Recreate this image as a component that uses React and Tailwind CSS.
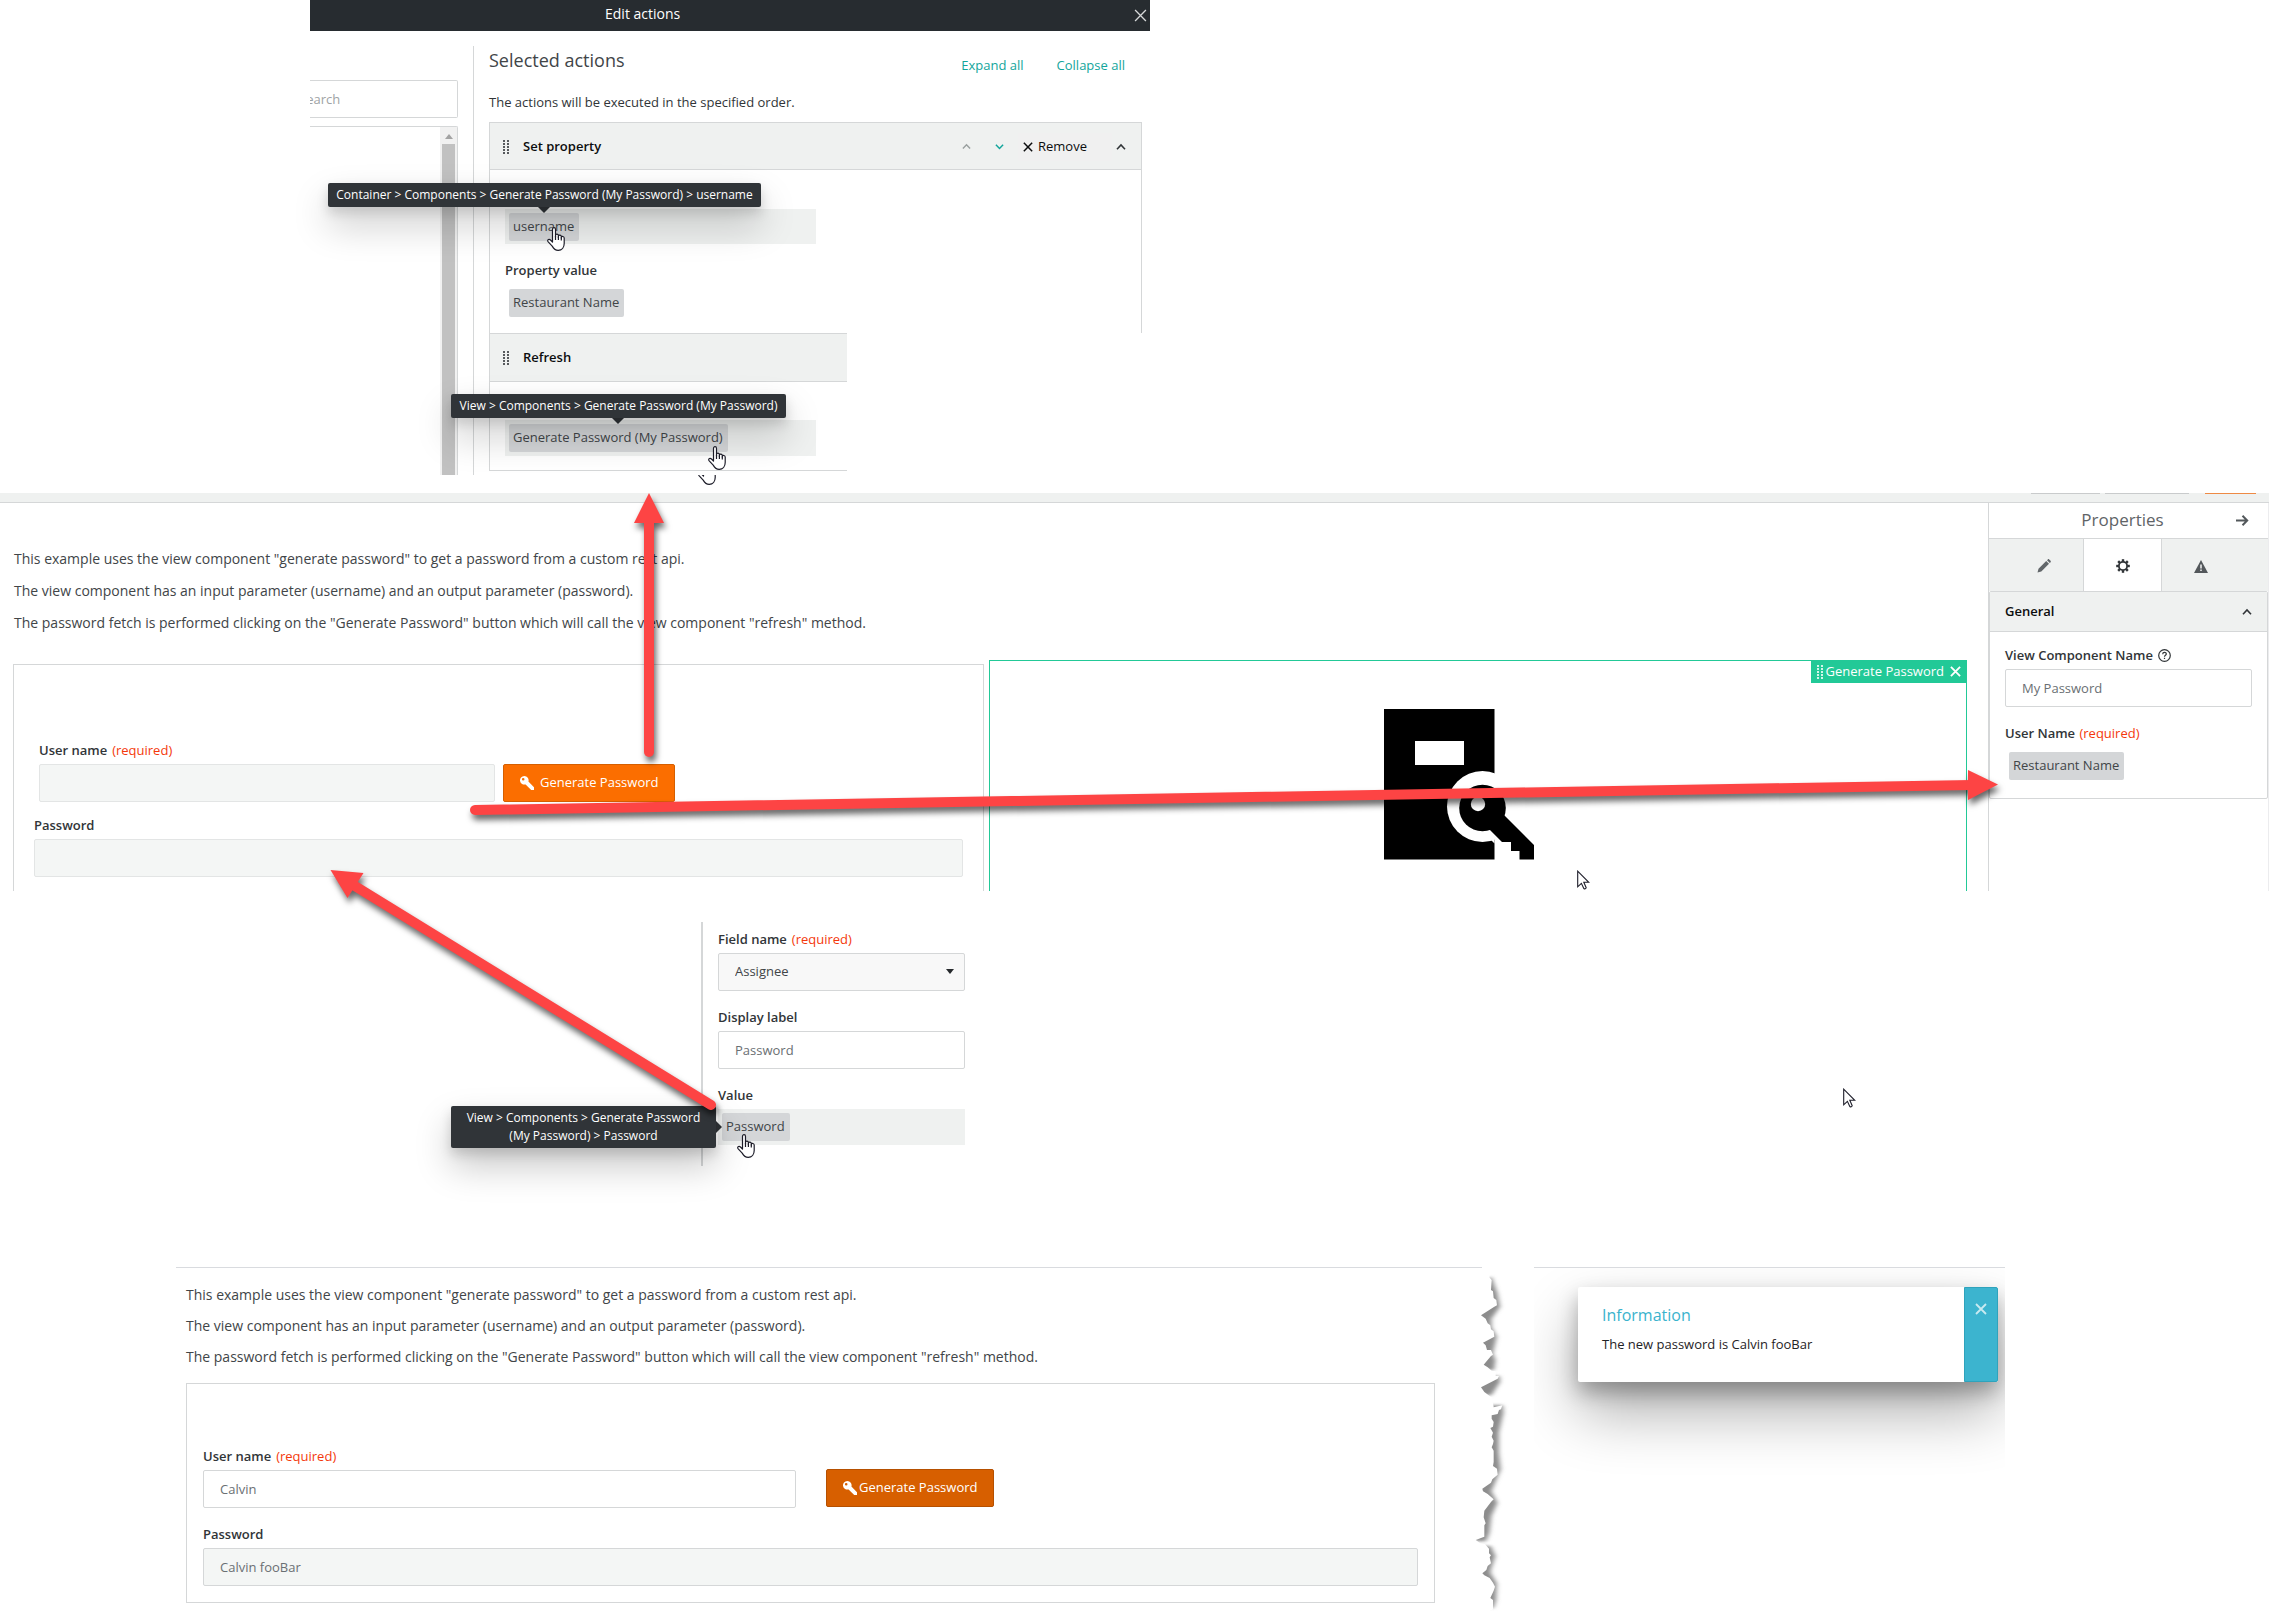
import React from "react";

const inputBase =
  "block h-[38px] rounded-[2px] border px-4 text-[13px] outline-none";
const inputPlain = inputBase + " border-[#d5d7d8] text-[#6a6f73]";
const inputMuted = inputBase + " border-[#e3e5e5] bg-[#f4f6f5] text-[#6a6f73]";

function Label({ htmlFor, required, children, className = "" }) {
  return (
    <label htmlFor={htmlFor} className={"mb-1 flex h-5 items-center text-[13px] leading-5 font-semibold text-[#313538] " + className}>
      {children}
      {required && <span className="ml-[5px] font-normal text-[#f4380b]">(required)</span>}
    </label>
  );
}

function Chip({ children, className = "" }) {
  return (
    <span className={"relative inline-flex h-7 items-center rounded-[2px] bg-[#d4d6d8] pr-[5px] pl-1 text-[13px] whitespace-nowrap text-[#414548] " + className}>
      {children}
    </span>
  );
}

function DragDots({ color }) {
  const cells = [];
  for (let r = 0; r < 5; r++) for (let c = 0; c < 2; c++) cells.push(<rect key={r + "-" + c} x={c * 4} y={r * 3} width="2" height="2" fill={color} />);
  return (
    <svg width="6" height="14" viewBox="0 0 6 14" fillOpacity="0.8" aria-hidden="true">
      {cells}
    </svg>
  );
}

function Chevron({ up, color, size = 9, weight = 1.6 }) {
  return (
    <svg width={size} height={size} viewBox="0 0 10 10" fill="none" stroke={color} strokeWidth={weight} aria-hidden="true">
      <path d={up ? "M1 7.2 5 3l4 4.2" : "M1 3l4 4.2L9 3"} />
    </svg>
  );
}

function Cross({ color, size, weight }) {
  return (
    <svg width={size} height={size} viewBox="0 0 12 12" fill="none" stroke={color} strokeWidth={weight} aria-hidden="true">
      <path d="M1 1l10 10M11 1L1 11" />
    </svg>
  );
}

function KeyIcon() {
  return (
    <svg width="14" height="14" viewBox="0 0 14 14" fill="#fff" aria-hidden="true">
      <path
        fillRule="evenodd"
        d="M4.3 0a4.3 4.3 0 0 1 4.1 5.6L14 11.2V14h-2.8L5.6 8.4A4.3 4.3 0 1 1 4.3 0zM3.2 1.9a1.3 1.3 0 1 0 0 2.6 1.3 1.3 0 0 0 0-2.6z"
      />
    </svg>
  );
}

function Hand({ className }) {
  return (
    <svg className={"absolute z-20 " + className} width="18" height="24" viewBox="0 0 18 24" fill="#fff" stroke="#1c1c28" strokeWidth="1.2" strokeLinejoin="round" aria-hidden="true">
      <path d="M5.5 15V2.4c0-2.3 3-2.3 3 0V10 8.2c.3-1.5 2.7-1.4 2.9.2v2-1.3c.4-1.4 2.7-1.2 2.9.4v1.6-.9c.5-1.2 2.8-.9 2.9.8v5.5c0 3.8-2.3 6.8-6 6.8-3.4 0-4.6-1.7-6-4.2L1 14.6c-1-2 1.2-3 2.5-1.6z" />
      <path d="M8.5 9v4M11.4 9.600v3.400M14.300 10.500v3" />
    </svg>
  );
}

function Pointer({ className }) {
  return (
    <svg className={"absolute " + className} width="13" height="20" viewBox="0 0 13 20" fill="#fff" stroke="#1c1c28" strokeWidth="1.1" aria-hidden="true">
      <path d="M.7 1.200v15.600l3.700-3.500 2.400 5.100c.4 1 2.700.2 2.300-.9L6.800 12.300h5z" />
    </svg>
  );
}

function Tooltip({ children, className = "" }) {
  return (
    <span
      role="tooltip"
      className={"absolute z-10 rounded-[2px] bg-[#303438] text-center text-[12px] font-medium text-white shadow-[0_6px_12px_rgba(0,0,0,0.15),0_18px_36px_rgba(0,0,0,0.22)] " + className}
    >
      {children}
    </span>
  );
}

function Caret({ className = "" }) {
  return <span className={"absolute z-10 border-x-[6px] border-t-[6px] border-x-transparent border-t-[#303438] " + className} />;
}

function Intro({ className }) {
  return (
    <div className={"flex flex-col text-[14px] leading-5 text-[#414548] " + className}>
      <p>This example uses the view component "generate password" to get a password from a custom rest api.</p>
      <p>The view component has an input parameter (username) and an output parameter (password).</p>
      <p>The password fetch is performed clicking on the "Generate Password" button which will call the view component "refresh" method.</p>
    </div>
  );
}

function EditActions() {
  return (
    <section className="relative ml-[310px] max-w-[840px]">
      <header className="flex h-[31px] items-center bg-[#272c30] text-white">
        <h1 className="flex-1 pb-[5px] pl-[295px] text-[14px] font-medium">Edit actions</h1>
        <button aria-label="Close" className="mr-[3px] pb-px">
          <Cross color="#d6d8d9" size={13} weight={1.2} />
        </button>
      </header>
      <div className="flex pt-[15px]">
        <aside className="flex w-[164px] flex-col border-r border-[#d5d7d8] pt-[34px] pr-[15px]">
          <label className="sr-only" htmlFor="search">Search actions</label>
          <div className="flex h-[38px] overflow-hidden rounded-r-[2px] border border-l-0 border-[#d5d7d8]">
            <input id="search" placeholder="Search" className="-ml-[11px] w-full pt-px text-[13px] outline-none placeholder:text-[#a0a3a5]" />
          </div>
          <div className="mt-2 flex flex-1 justify-end rounded-tr-[2px] border-t border-r border-[#d5d7d8]">
            <div className="flex w-[17px] flex-col items-center bg-[#f1f1f1]">
              <svg width="8" height="5" viewBox="0 0 8 5" className="mt-[7px] mb-[5px]" aria-hidden="true">
                <path d="M0 5l4-5 4 5z" fill="#a3a3a3" />
              </svg>
              <div className="w-[13px] flex-1 bg-[#c1c1c1]" />
            </div>
          </div>
        </aside>
        <div className="flex-1 pr-[8px] pl-[15px]">
          <div className="flex h-[46px] items-start">
            <h2 className="flex-1 text-[18px] leading-7 text-[#414548]">Selected actions</h2>
            <div className="flex gap-[33px] pt-[9px] pr-[17px] text-[13px] leading-5 text-[#12a59b]">
              <a href="#expand">Expand all</a>
              <a href="#collapse">Collapse all</a>
            </div>
          </div>
          <p className="mb-[10px] text-[13px] leading-5 text-[#313538]">The actions will be executed in the specified order.</p>
          <div className="border border-b-0 border-[#d5d7d8]">
            <div className="flex h-[47px] items-center border-b border-[#d5d7d8] bg-[#eff1f0] pt-px pr-[15px] pl-[13px]">
              <DragDots color="#313538" />
              <h3 className="ml-[14px] flex-1 text-[13px] font-semibold text-[#0c0d0e]">Set property</h3>
              <button aria-label="Move up"><Chevron up color="#9aa09f" /></button>
              <button aria-label="Move down" className="ml-6"><Chevron color="#12a59b" /></button>
              <button className="ml-[14px] flex h-7 items-center gap-[5px] bg-[#f0f0f0] pr-[25px] pl-[5px] text-[13px] text-[#0c0d0e]">
                <Cross color="#0c0d0e" size={10} weight={1.8} />
                Remove
              </button>
              <button aria-label="Collapse" className="ml-1"><Chevron up color="#313538" size={10} /></button>
            </div>
            <div className="px-[15px] pt-[39px] pb-4">
              <div className="flex h-[35px] w-[311px] items-center bg-[#eff1f0] pl-1">
                <Chip>
                  username
                  <Caret className="-top-[6px] left-[29px]" />
                  <Tooltip className="-top-[30px] -left-[181px] w-[433px] leading-6">Container &gt; Components &gt; Generate Password (My Password) &gt; username</Tooltip>
                  <Hand className="top-[14px] left-[38px]" />
                </Chip>
              </div>
              <p className="mt-4 mb-[9px] text-[13px] leading-5 font-semibold text-[#313538]">Property value</p>
              <div className="flex pl-1">
                <Chip>Restaurant Name</Chip>
              </div>
            </div>
          </div>
          <div className="mb-1 w-[358px] border-y border-l border-[#d5d7d8]">
            <div className="flex h-[48px] items-center border-b border-[#d5d7d8] bg-[#eff1f0] pl-[13px]">
              <DragDots color="#313538" />
              <h3 className="ml-[14px] text-[13px] font-semibold text-[#0c0d0e]">Refresh</h3>
            </div>
            <div className="px-[15px] pt-[38px] pb-[14px]">
              <div className="flex h-9 w-[311px] items-center bg-[#eff1f0] pl-1">
                <Chip>
                  Generate Password (My Password)
                  <Caret className="-top-[6px] left-[103px]" />
                  <Tooltip className="-top-[30px] -left-[58px] w-[335px] leading-6">View &gt; Components &gt; Generate Password (My Password)</Tooltip>
                  <Hand className="top-[22px] left-[199px]" />
                </Chip>
              </div>
            </div>
          </div>
        </div>
      </div>
      <div className="absolute top-full left-[388px] h-[11px] w-5 overflow-hidden">
        <Hand className="-top-[14px] left-0" />
      </div>
    </section>
  );
}

function BookKey() {
  return (
    <svg width="188" height="151" viewBox="0 0 188 151" aria-hidden="true">
      <path fillRule="evenodd" d="M0 0h110.500v150.500H0zM31 32v24h49V32z" />
      <circle cx="98.500" cy="97.500" r="35.500" fill="#fff" />
      <circle cx="98.500" cy="99" r="23.300" />
      <path d="M120 106l30 30v14.500h-14.500V142H127v-9h-9l-13-13z" />
      <path d="M107 131l3.500 3.500V128z" fill="#fff" />
      <circle cx="94" cy="95" r="7.200" fill="#fff" />
    </svg>
  );
}

function GearIcon() {
  const teeth = [0, 45, 90, 135, 180, 225, 270, 315];
  return (
    <svg width="14" height="14" viewBox="0 0 14 14" aria-hidden="true">
      <circle cx="7" cy="7" r="4.100" fill="none" stroke="#313538" strokeWidth="1.800" />
      {teeth.map((a) => (
        <rect key={a} x="5.800" y="0.200" width="2.400" height="2.600" fill="#313538" transform={`rotate(${a} 7 7)`} />
      ))}
    </svg>
  );
}

function Properties() {
  return (
    <aside className="w-[281px] border-x border-l-[#d5d7d8] border-r-[#ececee]">
      <div className="flex h-9 items-center border-b border-[#d5d7d8] pr-[19px] pb-px">
        <h2 className="flex-1 pl-[20px] text-center text-[17px] leading-6 text-[#5f6467]">Properties</h2>
        <button aria-label="Collapse panel">
          <svg width="13" height="11" viewBox="0 0 13 11" fill="none" stroke="#53585b" strokeWidth="2" aria-hidden="true">
            <path d="M0 5.500h11M6.500.8l4.700 4.700-4.700 4.700" />
          </svg>
        </button>
      </div>
      <div className="flex h-[52px] bg-[#eff1f0] pl-[16px]">
        <button aria-label="Styles" className="flex w-[78px] items-center justify-center pt-[2px]">
          <svg width="14" height="14" viewBox="0 0 14 14" fill="#62676a" aria-hidden="true">
            <path d="M.5 13.500l1-3.800 7.700-7.700 2.800 2.800-7.700 7.700zM10 1.200l.8-.8c.4-.4 1-.4 1.400 0l1.400 1.400c.4.4.4 1 0 1.400l-.8.8z" />
          </svg>
        </button>
        <button aria-label="Settings" className="flex w-[79px] items-center justify-center border-x border-[#d5d7d8] bg-white pt-[2px]">
          <GearIcon />
        </button>
        <button aria-label="Warnings" className="flex w-[78px] items-center justify-center pt-[2px]">
          <svg width="14" height="13" viewBox="0 0 14 13" aria-hidden="true">
            <path d="M7 0l7 13H0z" fill="#53585b" />
            <path d="M6.300 4.500h1.400v4H6.300zM6.300 9.600h1.400V11H6.300z" fill="#fff" />
          </svg>
        </button>
      </div>
      <div className="rounded-[2px] border border-[#d5d7d8]">
        <div className="flex h-10 items-center border-b border-[#d5d7d8] bg-[#eff1f0] px-[15px]">
          <h3 className="flex-1 text-[13px] font-semibold text-[#0c0d0e]">General</h3>
          <button aria-label="Collapse section"><Chevron up color="#313538" size={10} /></button>
        </div>
        <div className="px-[15px] pt-[13px] pb-[18px]">
          <Label htmlFor="component-name">
            View Component Name
            <svg className="ml-[5px]" width="13" height="13" viewBox="0 0 13 13" fill="none" stroke="#313538" strokeWidth="1.200" aria-hidden="true">
              <circle cx="6.500" cy="6.500" r="5.800" />
              <path d="M4.700 5.200c0-2.400 3.600-2.300 3.600-.2 0 1.300-1.800 1.300-1.800 2.700M6.500 8.700v1.300" />
            </svg>
          </Label>
          <input id="component-name" defaultValue="My Password" className={inputPlain + " w-full"} />
          <p className="mt-4 mb-[9px] text-[13px] leading-5 font-semibold text-[#313538]">
            User Name <span className="ml-px font-normal text-[#f4380b]">(required)</span>
          </p>
          <div className="flex pl-1">
            <Chip>Restaurant Name</Chip>
          </div>
        </div>
      </div>
    </aside>
  );
}

function Designer() {
  return (
    <section className="mt-[18px]">
      <div className="flex h-[10px] items-start justify-end border-b border-[#d5d7d8] bg-[#eff1f0] pr-[13px]">
        <span className="h-px w-[69px] bg-[#c9cbcc]" />
        <span className="ml-[5px] h-px w-[84px] bg-[#c9cbcc]" />
        <span className="ml-4 h-px w-[51px] bg-[#ee8a45]" />
      </div>
      <div className="flex">
        <div className="flex flex-1 flex-col pt-[46px] pr-[21px] pl-[13px]">
          <Intro className="gap-3 pl-px" />
          <div className="mt-[27px] grid flex-1 grid-cols-[971fr_978fr] gap-[5px]">
            <div className="mt-1 border border-b-0 border-[#d5d7d8] px-5 pt-[75px] pb-[14px]">
              <div className="ml-[5px]">
                <Label htmlFor="designer-user" required>User name</Label>
                <div className="flex gap-2">
                  <input id="designer-user" className={inputMuted + " w-[456px]"} />
                  <button className="flex h-[38px] items-center gap-[6px] rounded-[2px] border border-[#d55f00] bg-[#fb6e00] px-4 text-[13px] font-medium text-white">
                    <KeyIcon />
                    Generate Password
                  </button>
                </div>
              </div>
              <Label htmlFor="designer-password" className="mt-[13px]">Password</Label>
              <input id="designer-password" className={inputMuted + " w-full"} />
            </div>
            <div className="flex flex-col items-center border border-b-0 border-[#22c997] bg-white">
              <div className="-mt-px -mr-px flex h-[23px] items-center self-end bg-[#22c997] px-[6px] text-[13px] font-medium text-white">
                <DragDots color="#fff" />
                <span className="ml-[3px]">Generate Password</span>
                <button aria-label="Remove component" className="ml-[6px]"><Cross color="#fff" size={11} weight={2} /></button>
              </div>
              <div className="mt-[26px]">
                <BookKey />
              </div>
            </div>
          </div>
        </div>
        <Properties />
      </div>
    </section>
  );
}

function FieldPanel() {
  return (
    <section className="mt-[31px] ml-[701px] w-[264px] border-l-2 border-[#d5d7d8] pt-[7px] pb-[21px] pl-[15px]">
      <Label htmlFor="field-name" required>Field name</Label>
      <div className="relative">
        <select id="field-name" className={inputBase + " w-full appearance-none border-[#d5d7d8] bg-[#f8f8f8] text-[#414548]"}>
          <option>Assignee</option>
        </select>
        <svg className="pointer-events-none absolute top-4 right-[11px]" width="8" height="5" viewBox="0 0 8 5" aria-hidden="true">
          <path d="M0 0h8L4 5z" fill="#26292c" />
        </svg>
      </div>
      <Label htmlFor="display-label" className="mt-4">Display label</Label>
      <input id="display-label" defaultValue="Password" className={inputPlain + " w-full"} />
      <p className="mt-4 mb-1 text-[13px] leading-5 font-semibold text-[#313538]">Value</p>
      <div className="flex h-9 items-center bg-[#eff1f0] pl-1">
        <Chip>
          Password
          <Caret className="top-[11px] -left-[9px] -rotate-90" />
          <Tooltip className="top-[-7px] right-[calc(100%+6px)] w-[265px] px-3 py-[3px] leading-[18px] whitespace-normal">
            View &gt; Components &gt; Generate Password (My Password) &gt; Password
          </Tooltip>
          <Hand className="top-[21px] left-[15px]" />
        </Chip>
      </div>
    </section>
  );
}

function TornEdge() {
  return (
    <svg className="absolute -top-px left-[1284px]" width="60" height="348" viewBox="0 0 180 1044" aria-hidden="true">
      <defs>
        <filter id="torn-soft" x="-50%" y="-5%" width="200%" height="110%">
          <feGaussianBlur stdDeviation="8 4" />
        </filter>
      </defs>
      <g fill="#8c8c8c" filter="url(#torn-soft)">
        <path d="M40 60L94 32l18 50 8 40-26 36 0 26 16 28-12 50 8 20-4 30H40zM40 330h78l2 18-26 40H40zM40 418h88l2 22-14 60v60l6 50-28 66 18 34-18 40-6 50-10 26H40zM40 840h52l14 30-14 42 0 10 18 30-2 50-8 24H40z" />
      </g>
      <path
        fill="#fff"
        d="M0 20H90l-2 14 7 8-2 30 6 4 2 20 8 6 2 16-8 4-40 26 14 10 6 14 8 6 2 12 8 6 2 16-34 18 8 8 4 14 12 0 6 14-6 4-22 26 12 8 12 10 12 2v14l10 0-4 8-50 26 10 14 24 18 4 28 26-6-4 12-6 2-4 12-18 4v10l6 10-2 14-8 4 8 14-4 12 6 12-2 10-4 10 6 10v34l-2 12 12 8 2 18-16 14-4 10-26 18 2 8 14 8 18 16-8 8-20 26-2 20 6 18-4 6v34l-26 10 14 10 14 2 12 14v14l6 6-4 6 4 18-10 8-4 12-12 10 6 6 16 8 10 14 6 12-4 12-10 22 8 6v28l-16 8-12 12 4 6 16 4 16 8V1044H0z"
      />
    </svg>
  );
}

function Preview() {
  return (
    <section className="relative mt-[101px] ml-44 grid max-w-[1829px] grid-cols-[1306fr_471fr] gap-[52px] pb-[11px]">
      <div className="border-t border-[#d9dbdf] pt-[17px] pr-[47px] pl-[10px]">
        <Intro className="gap-[11px]" />
        <div className="mt-4 border border-[#d5d7d8] px-4 pt-[62px] pb-4">
          <Label htmlFor="preview-user" required>User name</Label>
          <div className="flex gap-[30px]">
            <input id="preview-user" defaultValue="Calvin" className={inputPlain + " w-[593px]"} />
            <button className="-mt-px flex h-[38px] items-center gap-[2px] rounded-[2px] border border-[#b65000] bg-[#d75f00] px-4 text-[13px] font-medium text-white">
              <KeyIcon />
              Generate Password
            </button>
          </div>
          <Label htmlFor="preview-password" className="mt-4">Password</Label>
          <input id="preview-password" defaultValue="Calvin fooBar" className={inputBase + " w-full border-[#d5d7d8] bg-[#f4f6f5] text-[#6a6f73]"} />
        </div>
      </div>
      <div className="overflow-hidden border-t border-[#d9dbdf] pt-[19px] pr-[7px] pl-11">
        <div role="status" className="flex h-[95px] rounded-[2px] bg-white shadow-[0_10px_20px_rgba(0,0,0,0.28),0_30px_60px_rgba(0,0,0,0.32)]">
          <div className="flex-1 pt-[18px] pl-6">
            <h2 className="text-[16px] leading-5 font-medium text-[#3ab3cd]">Information</h2>
            <p className="mt-[9px] text-[13px] leading-5 text-[#1f2326]">The new password is Calvin fooBar</p>
          </div>
          <button aria-label="Dismiss" className="flex w-[34px] justify-center rounded-r-[2px] border border-[#2fa3bc] bg-[#3cb4cf] pt-[15px]">
            <Cross color="#c8eaf1" size={12} weight={1.8} />
          </button>
        </div>
      </div>
      <TornEdge />
    </section>
  );
}

function Arrows() {
  return (
    <svg className="pointer-events-none absolute top-0 left-0 z-20 drop-shadow-[2px_5px_3px_rgba(0,0,0,0.6)]" width="2010" height="1130" viewBox="0 0 2010 1130" fill="#fd4444" stroke="#fd4444" aria-hidden="true">
      <g strokeWidth="10" strokeLinecap="round">
        <path d="M649 752V515" />
        <path d="M475 810L1972 785" />
        <path d="M711 1105L350 883" />
      </g>
      <g stroke="none">
        <path d="M649 493l15 30h-30z" />
        <path d="M1998 784.500l-30 15.500v-30z" />
        <path d="M330.500 870l33 3-16 25z" />
      </g>
    </svg>
  );
}

export default function App() {
  return (
    <main className="relative min-h-screen bg-white font-['Open_Sans',sans-serif]">
      <EditActions />
      <Designer />
      <FieldPanel />
      <Preview />
      <Arrows />
      <Pointer className="top-[870px] left-[1577px]" />
      <Pointer className="top-[1088px] left-[1843px]" />
    </main>
  );
}
